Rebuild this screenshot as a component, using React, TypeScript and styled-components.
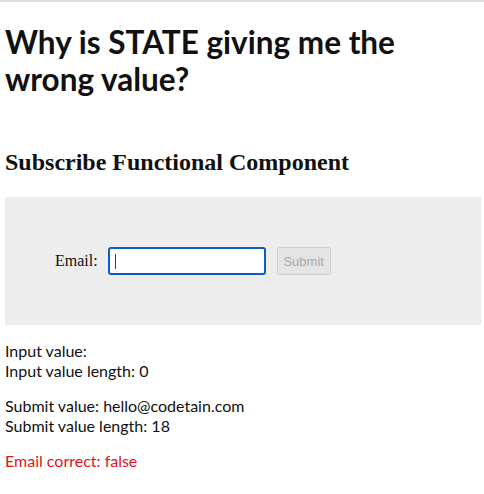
import React from 'react'
import styled, { createGlobalStyle } from 'styled-components'

const GlobalStyle = createGlobalStyle`
  body {
    margin: 0;
    padding: 0 3px 0 5px;
    border-top: 2px solid #dcdcdc;
    font-family: Lato, "Open Sans", sans-serif;
    color: #111;
    background: #fff;
  }
`

const Title = styled.h1`
  font-family: Lato, sans-serif;
  font-weight: 700;
  font-size: 31.5px;
  line-height: 37px;
  margin: 22px 0 0;
`

const SubTitle = styled.h2`
  font-family: "Liberation Serif", "Times New Roman", serif;
  font-weight: 700;
  font-size: 24px;
  line-height: 28px;
  margin: 50px 0 0;
`

const FormBox = styled.form`
  margin-top: 21px;
  height: 128px;
  background: #ededed;
  display: flex;
  align-items: center;
  padding-left: 50px;
  box-sizing: border-box;
`

const Label = styled.label`
  font-family: "Liberation Serif", "Times New Roman", serif;
  font-size: 16px;
  color: #111;
  margin-right: 10px;
`

const InputWrap = styled.div`
  position: relative;
  margin-right: 11px;
`

const EmailInput = styled.input`
  width: 158px;
  height: 28px;
  box-sizing: border-box;
  border: 2px solid #0a5cc7;
  border-radius: 3px;
  outline: none;
  background: #fff;
  padding: 0 6px;
  font-size: 14px;
`

const Caret = styled.span`
  position: absolute;
  left: 7px;
  top: 7px;
  width: 1px;
  height: 15px;
  background: #a11;
`

const SubmitButton = styled.button`
  height: 28px;
  width: 54px;
  font-family: "Liberation Sans", Arial, sans-serif;
  font-size: 13px;
  color: #a8a8a8;
  background: #e5e5e5;
  border: 1px solid #cfcfcf;
  border-radius: 2px;
  padding: 0;
`

const Info = styled.div`
  margin-top: 16px;
`

const Line = styled.p<{ $red?: boolean }>`
  margin: 0;
  font-size: 16px;
  line-height: 19.5px;
  color: ${p => (p.$red ? '#e0141b' : '#111')};
`

const Group = styled.div`
  margin-bottom: 16px;
`

export default function App() {
  const inputValue = ''
  const submitValue = 'hello@codetain.com'
  return (
    <>
      <GlobalStyle />
      <Title>Why is STATE giving me the wrong value?</Title>
      <SubTitle>Subscribe Functional Component</SubTitle>
      <FormBox onSubmit={e => e.preventDefault()}>
        <Label htmlFor="email">Email:</Label>
        <InputWrap>
          <EmailInput id="email" type="text" defaultValue="" />
          <Caret />
        </InputWrap>
        <SubmitButton type="submit" disabled>Submit</SubmitButton>
      </FormBox>
      <Info>
        <Group>
          <Line>Input value: {inputValue}</Line>
          <Line>Input value length: {inputValue.length}</Line>
        </Group>
        <Group>
          <Line>Submit value: {submitValue}</Line>
          <Line>Submit value length: {submitValue.length}</Line>
        </Group>
        <Line $red>Email correct: false</Line>
      </Info>
    </>
  )
}
